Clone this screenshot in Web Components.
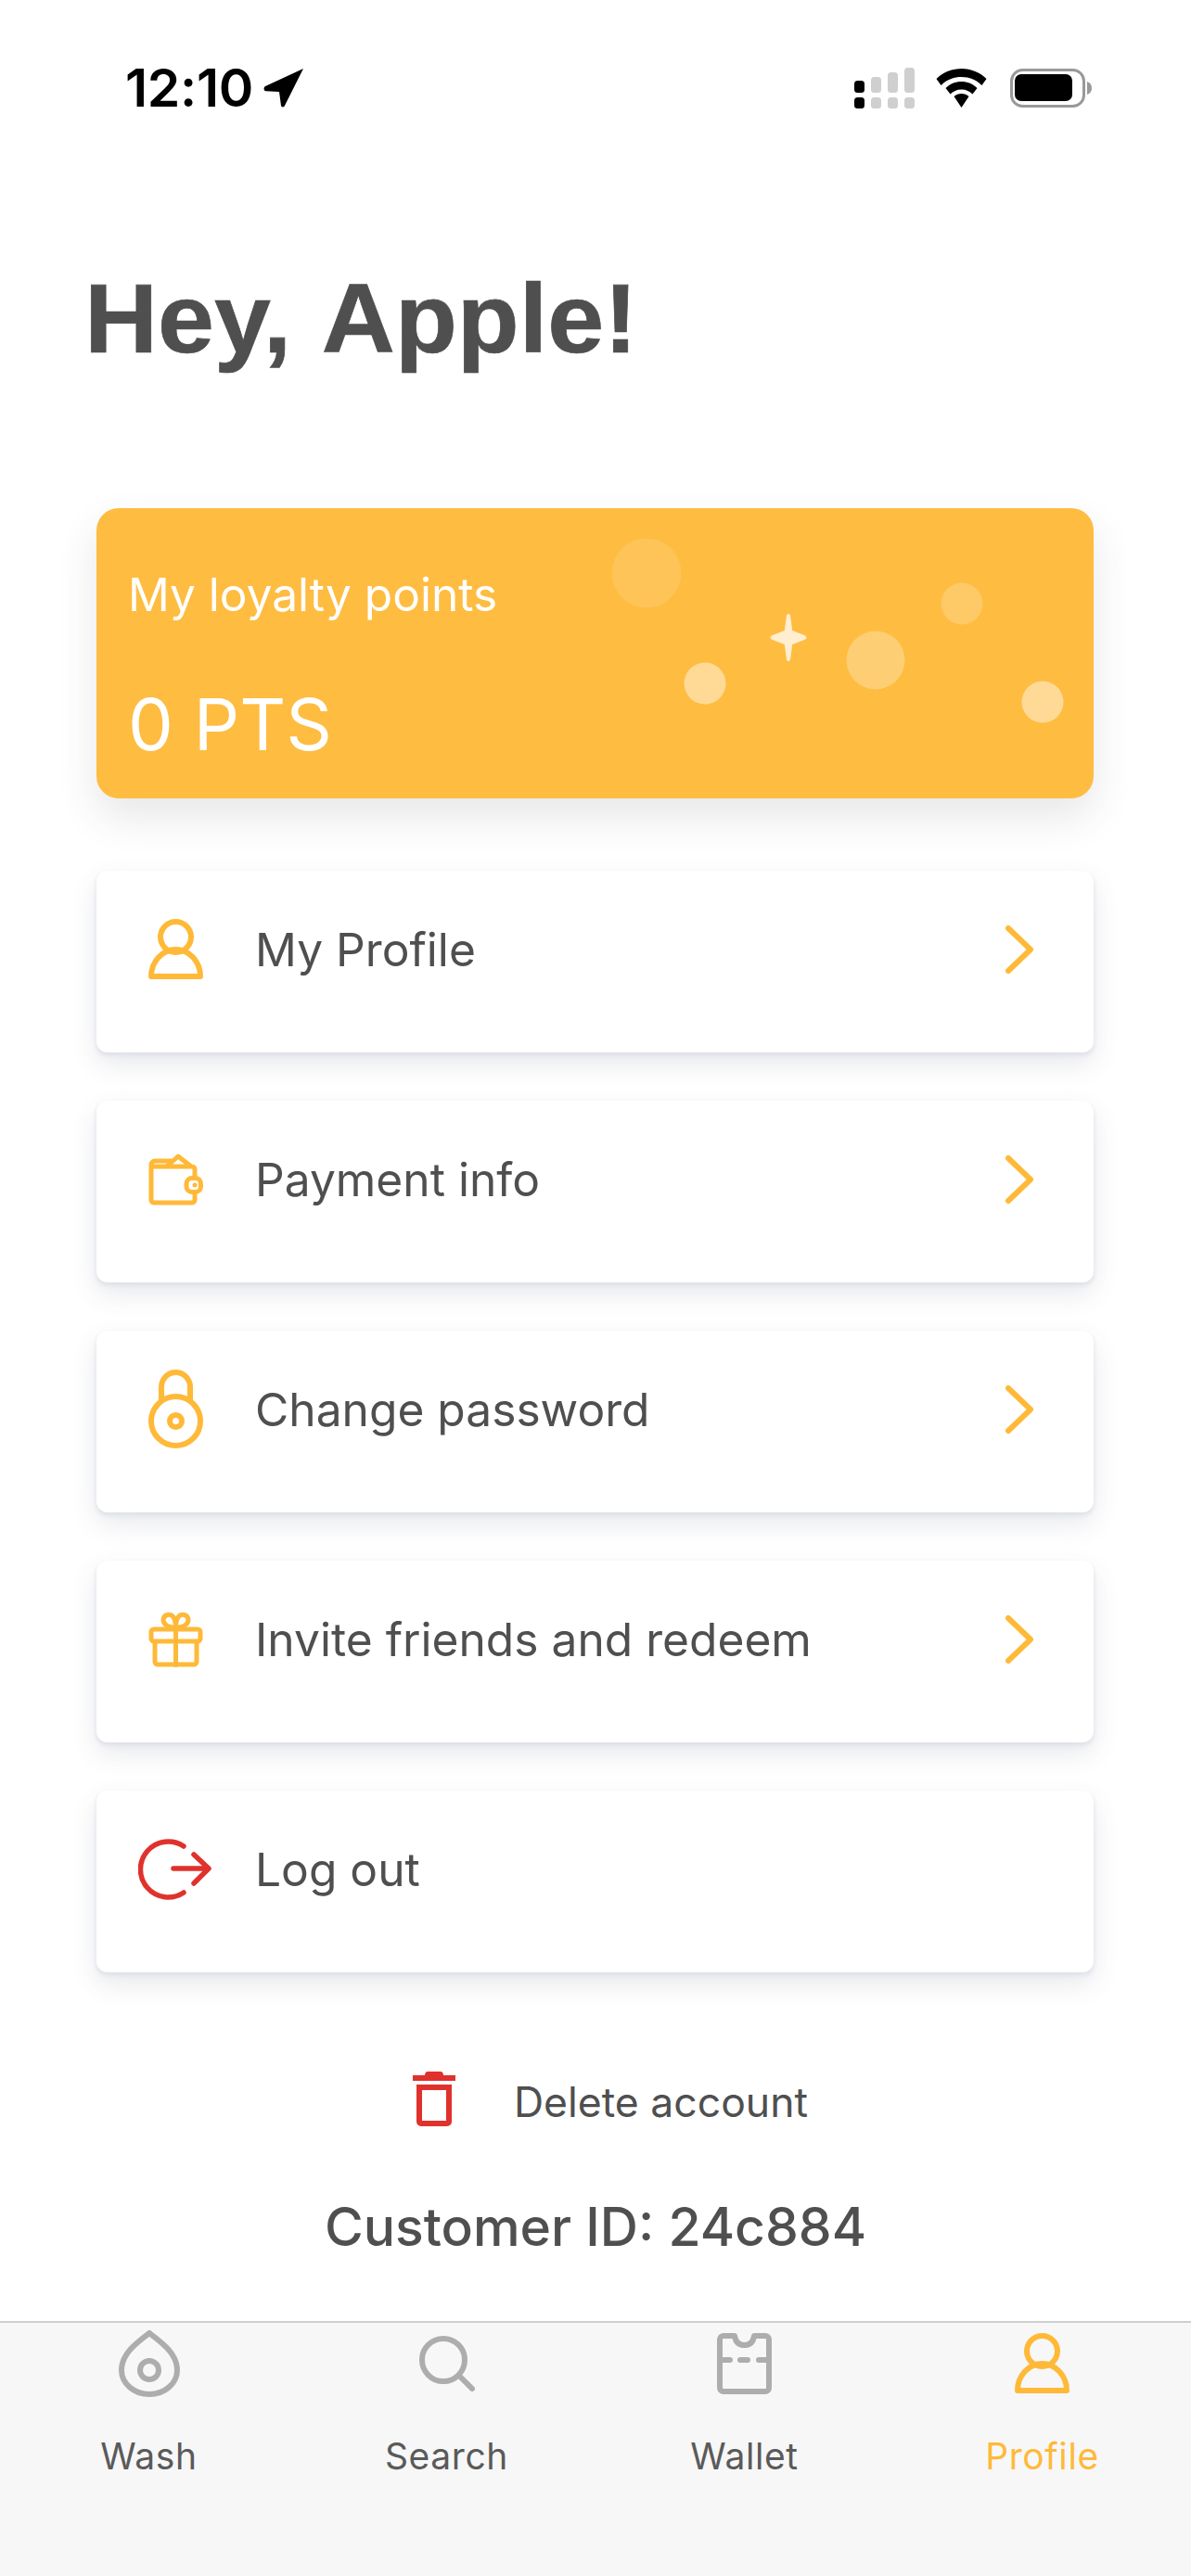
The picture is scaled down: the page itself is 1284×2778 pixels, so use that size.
<!DOCTYPE html>
<html>
<head>
<meta charset="utf-8">
<title>Profile</title>
<style>
	html,body{margin:0;padding:0;background:#fff}
	body{width:1284px;height:2778px;font-family:Inter,"Liberation Sans",sans-serif;color:#4f4f4f}
</style>
</head>
<body>
<profile-screen></profile-screen>
<script>
const ORANGE='#ffb938';
const RED='#e0322d';
const GREY='#adadad';

const ICONS={
	user:`<circle cx="29.500" cy="19.500" r="16.500"/><path d="M3 62C3 46 15 33 29.500 33S56 46 56 62Z"/>`,
	wallet:`<path d="M3 12a4 4 0 0 1 4-4H25M3 12V50a3 3 0 0 0 3 3H47a3 3 0 0 0 3-3V44M50 24V17a3 3 0 0 0-3-3H6M21 13 32 3 45 13"/><rect x="41" y="26.500" width="15.500" height="15" rx="6"/><path d="M50 34h.1"/>`,
	lock:`<circle cx="29.500" cy="55.500" r="26.500"/><circle cx="29.500" cy="55.500" r="6.500"/><path d="M14 32V18.500a15.500 15.500 0 0 1 31 0V32"/>`,
	gift:`<rect x="3" y="19" width="53" height="13" rx="3"/><path d="M7 33V54a3 3 0 0 0 3 3H49a3 3 0 0 0 3-3V33M29.500 17V58"/><path d="M29.500 17C20 17 16 13 16 9A6 6 0 0 1 27 6C29 9 29.500 12 29.500 17C39 17 43 13 43 9A6 6 0 0 0 32 6C30 9 29.500 12 29.500 17Z"/>`,
	logout:`<path d="M49 8A30 30 0 1 0 49 58"/><path d="M38 32H75M60 17 76 32 60 48"/>`,
	drop:`<path d="M33 3C20 13 3 25 3 43A30 26 0 0 0 63 43C63 25 46 13 33 3Z"/><circle cx="33" cy="43" r="10"/>`,
	search:`<circle cx="26" cy="26" r="23"/><path d="M43 43 57 57"/>`,
	card:`<path d="M7 3H19C20 10 24 13 29.500 13S39 10 40 3H52a4 4 0 0 1 4 4V59a4 4 0 0 1-4 4H7a4 4 0 0 1-4-4V7A4 4 0 0 1 7 3Z"/><path d="M3 29H14M25 29H33M45 29H56"/>`
};

const sbTemplate=document.createElement('template');
sbTemplate.innerHTML=`
<style>
	:host{display:flex;justify-content:space-between;align-items:flex-start;height:140px;box-sizing:border-box;padding:73px 107px 0 135px}
	.left,.right{display:flex;align-items:flex-start}
	.time{font:600 57px/44px Inter,"Liberation Sans",sans-serif;color:#000;letter-spacing:-.3px;width:149px}
	svg{display:block}
</style>
<div class="left">
	<span class="time">12:10</span>
	<svg width="44" height="44" viewBox="0 0 44 44"><path d="M43 1 2 20c-2 1-2 5 .7 5.200L17 26l2 15c.3 1.800 3.200 1.800 3.800.3Z"/></svg>
</div>
<div class="right">
	<svg width="65" height="44" viewBox="0 0 65 44" style="margin-right:23px">
		<rect x="0" y="14" width="11" height="13" rx="3.500"/><rect x="0" y="32" width="11" height="12" rx="3.500"/>
		<g fill="#cfcfcf"><rect x="18" y="10" width="11" height="17" rx="3.500"/><rect x="18" y="32" width="11" height="12" rx="3.500"/><rect x="36" y="5" width="11" height="22" rx="3.500"/><rect x="36" y="32" width="11" height="12" rx="3.500"/><rect x="54" y="0" width="11" height="27" rx="3.500"/><rect x="54" y="32" width="11" height="12" rx="3.500"/></g>
	</svg>
	<svg width="55" height="42" viewBox="0 0 54 42" style="margin-top:1px;margin-right:25px">
		<path d="M27 0c10.500 0 20 4 27 11l-5 7C43 12 35.500 9 27 9S11 12 5 18L0 11C7 4 16.500 0 27 0Z"/>
		<path d="M27 14c6.500 0 12.500 2.500 17 7l-5 6.500c-3-3-7-5-12-5s-9 2-12 5L10 21c4.500-4.500 10.500-7 17-7Z"/>
		<path d="M27 27c3 0 6 1 8 3L27 42l-8-12C21 28 24 27 27 27Z"/>
	</svg>
	<svg width="88" height="42" viewBox="0 0 88 42" style="margin-top:1px">
		<rect x="1.500" y="1.500" width="78" height="39" rx="12" fill="none" stroke="#999" stroke-width="3"/>
		<rect x="5" y="6" width="62" height="29" rx="7"/>
		<path d="M83 14c3 1 5 3.500 5 7s-2 6-5 7Z" fill="#999"/>
	</svg>
</div>`;
class StatusBar extends HTMLElement{
	constructor(){
		super();
		this.attachShadow({mode:'open'}).appendChild(sbTemplate.content.cloneNode(true));
	}
}
customElements.define('status-bar',StatusBar);

const pointsTemplate=document.createElement('template');
pointsTemplate.innerHTML=`
<style>
	:host{display:block;position:relative;height:313px;background:#febc41;border-radius:24px;box-shadow:0 20px 44px rgba(60,60,70,.12);color:#fff}
	.wrap{display:flex;flex-direction:column;padding:65px 34px 0}
	.label{font-size:49.600px;line-height:56px;font-weight:400}
	.pts{font-size:77.500px;line-height:90px;margin-top:67px;font-weight:400}
	svg{position:absolute;left:0;top:0}
</style>
<svg width="1075" height="313" viewBox="0 0 1075 313">
	<circle cx="593" cy="70" r="37.500" fill="#fff" fill-opacity=".12"/>
	<circle cx="656" cy="189" r="22.500" fill="#fff" fill-opacity=".45"/>
	<circle cx="840" cy="164" r="31.500" fill="#fff" fill-opacity=".27"/>
	<circle cx="933" cy="103" r="22.500" fill="#fff" fill-opacity=".2"/>
	<circle cx="1020" cy="209" r="22.500" fill="#fff" fill-opacity=".45"/>
	<path d="M746 114c1.500 0 2 1 2.200 3l2 15 13 5c3 1.300 3 3.700 0 5l-13 5-2 15c-.2 2-.7 3-2.200 3s-2-1-2.200-3l-2-15-13-5c-3-1.300-3-3.700 0-5l13-5 2-15c.2-2 .7-3 2.200-3Z" fill="#fff" fill-opacity=".75"/>
</svg>
<div class="wrap">
	<div class="label"><slot name="label"></slot></div>
	<div class="pts"><slot name="value"></slot></div>
</div>`;
class PointsCard extends HTMLElement{
	constructor(){
		super();
		this.attachShadow({mode:'open'}).appendChild(pointsTemplate.content.cloneNode(true));
	}
}
customElements.define('points-card',PointsCard);

class StrokeIcon extends HTMLElement{
	constructor(){
		super();
		this.attachShadow({mode:'open'});
	}
	connectedCallback(){
		const w=this.getAttribute('w')||60, h=this.getAttribute('h')||60;
		this.shadowRoot.innerHTML=`<style>:host{display:block;line-height:0}</style>
		<svg width="${w}" height="${h}" viewBox="0 0 ${w} ${h}" fill="none" stroke="${this.getAttribute('color')||ORANGE}" stroke-width="${this.getAttribute('sw')||6}" stroke-linecap="round" stroke-linejoin="round">${ICONS[this.getAttribute('name')]}</svg>`;
	}
}
customElements.define('stroke-icon',StrokeIcon);

const rowTemplate=document.createElement('template');
rowTemplate.innerHTML=`
<style>
	:host{display:flex;align-items:center;height:196px;box-sizing:border-box;padding-bottom:26px;background:#fff;border-radius:12px;box-shadow:0 3px 5px #dde0e7,0 12px 28px rgba(70,80,110,.13);font-size:49.700px;color:#4f4f4f}
	.icon{width:171px;flex:none;padding-left:56px;box-sizing:border-box}
	.text{flex:1}
	.chev{margin-right:64px;display:block}
	:host([plain]) .chev{display:none}
</style>
<div class="icon"><slot name="icon"></slot></div>
<div class="text"><slot></slot></div>
<svg class="chev" width="32" height="54" viewBox="0 0 32 54" fill="none" stroke="${ORANGE}" stroke-width="6" stroke-linecap="round" stroke-linejoin="round"><path d="M4 4 28 27 4 50"/></svg>`;
class MenuRow extends HTMLElement{
	constructor(){
		super();
		this.attachShadow({mode:'open'}).appendChild(rowTemplate.content.cloneNode(true));
	}
}
customElements.define('menu-row',MenuRow);

const tabTemplate=document.createElement('template');
tabTemplate.innerHTML=`
<style>
	:host{display:flex;flex-direction:column;align-items:center;flex:1;font-size:39px;color:#5a5a5a}
	:host([active]){color:${ORANGE}}
	.icon{height:72px;display:flex;align-items:center}
	.label{margin-top:39px;line-height:50px;letter-spacing:.6px}
</style>
<div class="icon"><slot name="icon"></slot></div>
<div class="label"><slot></slot></div>`;
class TabItem extends HTMLElement{
	constructor(){
		super();
		this.attachShadow({mode:'open'}).appendChild(tabTemplate.content.cloneNode(true));
	}
}
customElements.define('tab-item',TabItem);

const tabbarTemplate=document.createElement('template');
tabbarTemplate.innerHTML=`
<style>
	:host{display:flex;height:275px;background:#f7f7f7;border-top:2px solid #cfcfcf;padding-top:8px;box-sizing:border-box}
</style>
<slot></slot>`;
class TabBar extends HTMLElement{
	constructor(){
		super();
		this.attachShadow({mode:'open'}).appendChild(tabbarTemplate.content.cloneNode(true));
	}
}
customElements.define('tab-bar',TabBar);

const screenTemplate=document.createElement('template');
screenTemplate.innerHTML=`
<style>
	:host{display:flex;flex-direction:column;width:1284px;height:2778px;background:#fff;font-family:Inter,"Liberation Sans",sans-serif}
	h1{margin:0;padding:142px 0 0 91px;font:700 105px/124px "Liberation Sans",sans-serif;color:#4f4f4f;-webkit-text-stroke:.7px #4f4f4f;word-spacing:6px}
	h1 span{display:inline-block;transform:scaleX(1.043);transform-origin:left}
	.list{display:flex;flex-direction:column;gap:78px;padding:142px 105px 0 104px}
	.rows{display:flex;flex-direction:column;gap:52px}
	.delete{display:flex;align-items:center;justify-content:center;gap:63px;margin-top:107px;padding-left:32px;height:59px;font-size:44.500px;color:#4f4f4f}
	.delete span{padding-top:6px}
	.cust{text-align:center;margin-top:74px;font-size:57px;line-height:70px;font-weight:500;color:#4f4f4f}
	tab-bar{margin-top:auto}
</style>
<status-bar></status-bar>
<h1><span>Hey, Apple!</span></h1>
<div class="list">
	<points-card><span slot="label">My loyalty points</span><span slot="value">0 PTS</span></points-card>
	<div class="rows">
		<menu-row><stroke-icon slot="icon" name="user" w="60" h="66"></stroke-icon>My Profile</menu-row>
		<menu-row><stroke-icon slot="icon" name="wallet" w="60" h="57" sw="5"></stroke-icon>Payment info</menu-row>
		<menu-row><stroke-icon slot="icon" name="lock" w="60" h="86"></stroke-icon>Change password</menu-row>
		<menu-row><stroke-icon slot="icon" name="gift" w="60" h="60" sw="5"></stroke-icon>Invite friends and redeem</menu-row>
		<menu-row plain><stroke-icon slot="icon" name="logout" color="${RED}" w="80" h="66" sw="5.500" style="margin-left:-11px"></stroke-icon>Log out</menu-row>
	</div>
</div>
<div class="delete">
	<svg width="46" height="59" viewBox="0 0 46 59" fill="${RED}"><path d="M13 4c0-2 1-4 3-4h14c2 0 3 2 3 4h13v6H0V4Z"/><path fill-rule="evenodd" d="M4 14h38v40a5 5 0 0 1-5 5H9a5 5 0 0 1-5-5ZM10 20v33h26V20Z"/></svg>
	<span>Delete account</span>
</div>
<div class="cust">Customer ID: 24c884</div>
<tab-bar>
	<tab-item><stroke-icon slot="icon" name="drop" color="${GREY}" w="66" h="72"></stroke-icon>Wash</tab-item>
	<tab-item><stroke-icon slot="icon" name="search" color="${GREY}" w="60" h="60"></stroke-icon>Search</tab-item>
	<tab-item><stroke-icon slot="icon" name="card" color="${GREY}" w="60" h="66"></stroke-icon>Wallet</tab-item>
	<tab-item active><stroke-icon slot="icon" name="user" w="60" h="66"></stroke-icon>Profile</tab-item>
</tab-bar>`;
class ProfileScreen extends HTMLElement{
	constructor(){
		super();
		this.attachShadow({mode:'open'}).appendChild(screenTemplate.content.cloneNode(true));
	}
}
customElements.define('profile-screen',ProfileScreen);
</script>
</body>
</html>
